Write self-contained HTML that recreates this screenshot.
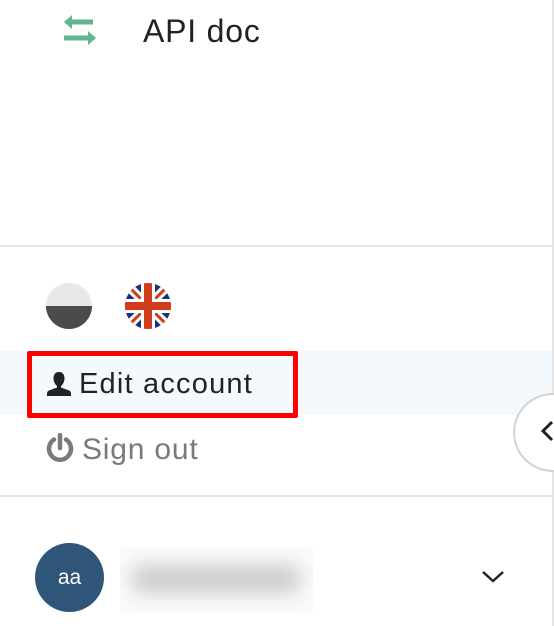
<!DOCTYPE html>
<html><head><style>
*{margin:0;padding:0;box-sizing:border-box}
body{width:554px;height:626px;background:#fff;position:relative;overflow:hidden;font-family:"Liberation Sans",sans-serif}
.a{position:absolute}
</style></head><body>
<div class="a" style="left:552px;top:0;width:2px;height:626px;background:#e6e6e6"></div>
<svg class="a" style="left:60px;top:12px" width="40" height="40" viewBox="0 0 40 40">
<path d="M12 3 L4 10 L12 17 L12 12.5 L33 12.5 L33 7.5 L12 7.5Z" fill="#63b58f"/>
<path d="M28 19 L36 26 L28 33 L28 28.5 L4 28.5 L4 23.5 L28 23.5Z" fill="#63b58f"/>
</svg>
<div class="a" style="left:143px;top:13px;font-size:32px;letter-spacing:0.8px;color:#222">API doc</div>
<div class="a" style="left:0;top:245px;width:552px;height:2px;background:#e4e4e4"></div>
<div class="a" style="left:46px;top:283px;width:46px;height:46px;border-radius:50%;background:linear-gradient(#e8e8e8 50%,#4a4a4a 50%)"></div>
<svg class="a" style="left:125px;top:283px" width="46" height="46" viewBox="0 0 46 46">
<defs><clipPath id="c"><circle cx="23" cy="23" r="23"/></clipPath></defs>
<g clip-path="url(#c)">
<rect width="46" height="46" fill="#1f2f72"/>
<path d="M0 0L46 46M46 0L0 46" stroke="#fff" stroke-width="9"/>
<path d="M0 0L46 46M46 0L0 46" stroke="#cf3d1a" stroke-width="3"/>
<rect x="16" y="0" width="14" height="46" fill="#fff"/>
<rect x="0" y="16" width="46" height="14" fill="#fff"/>
<rect x="19" y="0" width="8" height="46" fill="#cf3d1a"/>
<rect x="0" y="19" width="46" height="8" fill="#cf3d1a"/>
</g></svg>
<div class="a" style="left:0;top:351px;width:552px;height:64px;background:#f3f9fd"></div>
<div class="a" style="left:27px;top:351px;width:271px;height:67px;border:5px solid #f00;border-radius:2px"></div>
<svg class="a" style="left:46px;top:371px" width="26" height="26" viewBox="0 0 26 26">
<path d="M13 1C9 1 7.5 4 7.5 7.5C7.5 11 9.5 14 11 15L11 16.5L3 19.5C1.5 20 1 21.5 1 23L1 25L25 25L25 23C25 21.5 24.5 20 23 19.5L15 16.5L15 15C16.5 14 18.5 11 18.5 7.5C18.5 4 17 1 13 1Z" fill="#222"/>
</svg>
<div class="a" style="left:79px;top:368px;font-size:29px;letter-spacing:1.2px;color:#222">Edit account</div>
<svg class="a" style="left:45px;top:433px" width="30" height="32" viewBox="0 0 30 32">
<path d="M9 6.5A11 11 0 1 0 21 6.5" fill="none" stroke="#7a7a7a" stroke-width="4.5" stroke-linecap="round"/>
<path d="M15 2V15" stroke="#7a7a7a" stroke-width="4.5" stroke-linecap="round"/>
</svg>
<div class="a" style="left:82px;top:433px;font-size:30px;letter-spacing:0.8px;color:#7a7a7a">Sign out</div>
<div class="a" style="left:513px;top:393px;width:80px;height:79px;border-radius:50%;border:2px solid #d3d3d3;background:#fff"></div>
<svg class="a" style="left:538px;top:418px" width="16" height="28" viewBox="0 0 16 28"><path d="M14 4L5 13L14 22" fill="none" stroke="#222" stroke-width="3"/></svg>
<div class="a" style="left:0;top:495px;width:552px;height:2px;background:#e4e4e4"></div>
<div class="a" style="left:35px;top:543px;width:69px;height:69px;border-radius:50%;background:#2f5679;color:#fff;font-size:21px;text-align:center;line-height:69px">aa</div>
<div class="a" style="left:120px;top:548px;width:193px;height:64px;background:#fafafa;overflow:hidden">
<div class="a" style="left:10px;top:16px;width:172px;height:30px;background:#cfcfcf;border-radius:15px;filter:blur(9px)"></div>
</div>
<svg class="a" style="left:480px;top:568px" width="26" height="18" viewBox="0 0 26 18"><path d="M3 4L13 13L23 4" fill="none" stroke="#222" stroke-width="2.5"/></svg>
</body></html>
